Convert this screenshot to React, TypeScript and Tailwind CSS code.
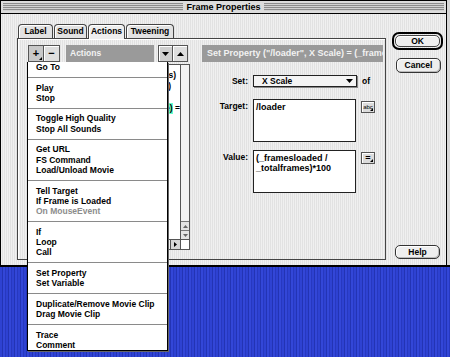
import React from 'react';

type MenuEntry = { label?: string; disabled?: boolean; sep?: boolean };

const menuEntries: MenuEntry[] = [
  { label: 'Go To' },
  { sep: true },
  { label: 'Play' },
  { label: 'Stop' },
  { sep: true },
  { label: 'Toggle High Quality' },
  { label: 'Stop All Sounds' },
  { sep: true },
  { label: 'Get URL' },
  { label: 'FS Command' },
  { label: 'Load/Unload Movie' },
  { sep: true },
  { label: 'Tell Target' },
  { label: 'If Frame is Loaded' },
  { label: 'On MouseEvent', disabled: true },
  { sep: true },
  { label: 'If' },
  { label: 'Loop' },
  { label: 'Call' },
  { sep: true },
  { label: 'Set Property' },
  { label: 'Set Variable' },
  { sep: true },
  { label: 'Duplicate/Remove Movie Clip' },
  { label: 'Drag Movie Clip' },
  { sep: true },
  { label: 'Trace' },
  { label: 'Comment' },
];

const tabs = [
  { name: 'Label', w: 'w-[35px]' },
  { name: 'Sound', w: 'w-[33px]' },
  { name: 'Actions', w: 'w-[37px]', active: true },
  { name: 'Tweening', w: 'w-[48px]' },
];

function TriDown() {
  return (
    <svg width="7" height="4" viewBox="0 0 7 4">
      <polygon points="0,0 7,0 3.5,4" fill="#000" />
    </svg>
  );
}

function TriUp() {
  return (
    <svg width="7" height="4" viewBox="0 0 7 4">
      <polygon points="0,4 7,4 3.5,0" fill="#000" />
    </svg>
  );
}

// little popup marker in the lower right corner of a button
function Corner() {
  return (
    <svg className="absolute right-[1px] bottom-[1px]" width="3" height="3" viewBox="0 0 3 3">
      <polygon points="3,0 3,3 0,3" fill="#000" />
    </svg>
  );
}

function TitleBar() {
  return (
    <div className="h-[13px] flex items-center px-[2px] border-b border-black bg-[#dcdcdc]">
      <div className="flex-1 h-[8px] bg-[image:repeating-linear-gradient(180deg,#8c8c8c_0px,#8c8c8c_1px,#d2d2d2_1px,#d2d2d2_2px)]" />
      <div className="px-[3px] text-[9px] leading-[12px] whitespace-nowrap">Frame Properties</div>
      <div className="flex-1 h-[8px] bg-[image:repeating-linear-gradient(180deg,#8c8c8c_0px,#8c8c8c_1px,#d2d2d2_1px,#d2d2d2_2px)]" />
    </div>
  );
}

function Tabs() {
  return (
    <div className="h-[14px] flex items-start gap-[1px] pl-[1px]">
      {tabs.map((t) =>
        t.active ? (
          <div
            key={t.name}
            className={`${t.w} relative z-10 h-[15px] rounded-t-[4px] border border-b-0 border-[#444] bg-[#eeeeee] shadow-[inset_1px_1px_0_#fff] text-center text-[8.5px] leading-[13px]`}
          >
            {t.name}
          </div>
        ) : (
          <div
            key={t.name}
            className={`${t.w} h-[14px] rounded-t-[4px] border border-b-0 border-[#444] bg-[#e2e2e2] shadow-[inset_1px_1px_0_#fff] text-center text-[8.5px] leading-[13px]`}
          >
            {t.name}
          </div>
        )
      )}
    </div>
  );
}

function ActionList() {
  return (
    <div className="w-[163px] flex flex-col">
      {/* toolbar */}
      <div className="h-[17px] flex">
        <div className="relative ml-[1px] w-[16px] border border-[#555] bg-[#c8c8c8] flex items-center justify-center text-[11px] leading-none">
          +
          <Corner />
        </div>
        <div className="w-[16px] border border-l-0 border-[#555] bg-[#dedede] shadow-[inset_1px_1px_0_#fff] flex items-center justify-center text-[11px] leading-none">
          −
        </div>
        <div className="ml-[6px] w-[88px] bg-[#9a9a9a] text-[#f2f2f2] text-[8.5px] leading-[17px] pl-[4px]">Actions</div>
        <div className="ml-[4px] w-[15px] border border-[#555] bg-[#cfcfcf] shadow-[inset_1px_1px_0_#fff] flex items-center justify-center">
          <TriDown />
        </div>
        <div className="w-[15px] border border-l-0 border-[#555] bg-[#dedede] shadow-[inset_1px_1px_0_#fff] flex items-center justify-center">
          <TriUp />
        </div>
      </div>

      {/* list box */}
      <div className="mt-[2px] h-[186px] border border-[#555] bg-white flex flex-col">
        <div className="flex-1 flex">
          <div className="flex-1 pt-[5px] overflow-hidden text-[8.5px]">
            <div className="h-[11px] leading-[11px] flex justify-end overflow-hidden whitespace-nowrap pr-[4px]">
              Load Movie ("loader.swf", 1, Vars=POST)s)
            </div>
            <div className="h-[11px] leading-[11px] flex justify-end overflow-hidden whitespace-nowrap pr-[9px]">
              Tell Target ("/loader")
            </div>
            <div className="h-[11px] leading-[11px] flex justify-end overflow-hidden whitespace-nowrap pr-[30px]">
              Go to and Play (2)
            </div>
            <div className="h-[11px] leading-[11px] flex justify-end overflow-hidden whitespace-nowrap">
              <span className="bg-[#66ffcc]">Set Property ("/loader", X Scale) = (_framesloade)</span>
              <span>&nbsp;=</span>
            </div>
          </div>
          <div className="w-[9px] border-l border-[#555] flex flex-col">
            <div className="flex-1 bg-[#f2f2f2]" />
            <div className="h-[9px] border-t border-[#777] bg-[#e4e4e4] flex items-center justify-center">
              <svg width="5" height="3" viewBox="0 0 5 3">
                <polygon points="0,3 5,3 2.5,0" fill="#666" />
              </svg>
            </div>
            <div className="h-[9px] border-t border-[#777] bg-[#e4e4e4] flex items-center justify-center">
              <svg width="5" height="3" viewBox="0 0 5 3">
                <polygon points="0,0 5,0 2.5,3" fill="#666" />
              </svg>
            </div>
          </div>
        </div>
        <div className="h-[10px] border-t border-[#555] flex">
          <div className="flex-1 bg-[#f2f2f2]" />
          <div className="w-[10px] border-l border-[#555] bg-[#d8d8d8] flex items-center justify-center">
            <svg width="3" height="5" viewBox="0 0 3 5">
              <polygon points="0,0 3,2.5 0,5" fill="#000" />
            </svg>
          </div>
          <div className="w-[9px] border-l border-[#555] bg-white" />
        </div>
      </div>
    </div>
  );
}

function PropertyForm() {
  return (
    <div className="ml-[12px] w-[181px] flex flex-col text-[8.5px]">
      <div className="h-[17px] bg-[#9a9a9a] text-[#f2f2f2] text-[9px] leading-[17px] pl-[5px] whitespace-nowrap overflow-hidden">
        Set Property ("/loader", X Scale) = (_framesloaded / _totalframes)*100
      </div>

      <div className="mt-[13px] h-[12px] flex items-center">
        <div className="w-[46px] text-right">Set:</div>
        <div className="ml-[5px] w-[104px] h-[12px] border border-[#222] bg-[#f4f4f4] shadow-[1px_1px_0_#888] flex items-center pl-[8px] pr-[3px]">
          <span className="flex-1 leading-[10px]">X Scale</span>
          <TriDown />
        </div>
        <div className="ml-[5px]">of</div>
      </div>

      <div className="mt-[12px] flex items-start">
        <div className="w-[46px] text-right pt-[2px] leading-[10px]">Target:</div>
        <div className="ml-[5px] w-[103px] h-[43px] border border-[#222] bg-white px-[2px] pt-[2px] text-[9px] leading-[10px]">/loader</div>
        <div className="relative ml-[5px] mt-[2px] w-[14px] h-[12px] border border-[#555] bg-[#dcdcdc] shadow-[inset_1px_1px_0_#fff] text-[6px] leading-[10px] text-center font-normal">
          abc
          <Corner />
        </div>
      </div>

      <div className="mt-[8px] flex items-start">
        <div className="w-[46px] text-right pt-[2px] leading-[10px]">Value:</div>
        <div className="ml-[5px] w-[103px] h-[43px] border border-[#222] bg-white px-[2px] pt-[2px] text-[9px] leading-[10px]">
          <div>(_framesloaded /</div>
          <div>_totalframes)*100</div>
        </div>
        <div className="relative ml-[5px] mt-[2px] w-[14px] h-[12px] border border-[#555] bg-[#dcdcdc] shadow-[inset_1px_1px_0_#fff] text-[9px] leading-[10px] text-center">
          =
          <Corner />
        </div>
      </div>
    </div>
  );
}

function PopupMenu() {
  return (
    <div className="absolute left-[27px] top-[62px] w-[141px] bg-white border border-t-0 border-black shadow-[1px_1px_0_#666] text-[8.5px]">
      {menuEntries.map((m, i) =>
        m.sep ? (
          <div key={i} className="h-[10.3px] flex items-center">
            <div className="h-px w-full bg-[#8a8a8a]" />
          </div>
        ) : (
          <div
            key={i}
            className={
              m.disabled
                ? 'h-[10.3px] leading-[10.3px] pl-[8px] whitespace-nowrap text-[#8c8c8c]'
                : 'h-[10.3px] leading-[10.3px] pl-[8px] whitespace-nowrap'
            }
          >
            {m.label}
          </div>
        )
      )}
    </div>
  );
}

export default function App() {
  return (
    <div className="relative w-[450px] h-[357px] overflow-hidden font-['Liberation_Sans',Arial,sans-serif] font-bold text-black select-none">
      <div className="flex h-[267px]">
        <div className="w-[447px] h-full flex flex-col border border-b-2 border-black bg-[image:repeating-linear-gradient(90deg,#f0f0f0_0px,#f0f0f0_1px,#e2e2e2_1px,#e2e2e2_2px)]">
          <TitleBar />
          <div className="flex-1 flex pl-[16px] pt-[10px]">
            {/* tabs + panel */}
            <div className="w-[369px] flex flex-col">
              <Tabs />
              <div className="h-[222px] border border-[#444] shadow-[inset_1px_1px_0_#fff] flex pt-[6px] pl-[9px]">
                <ActionList />
                <PropertyForm />
              </div>
            </div>

            {/* buttons */}
            <div className="ml-[6px] w-[53px] flex flex-col pt-[8px] pb-[6px] text-[8.5px]">
              <div className="w-[51px] h-[18px] rounded-[7px] border-2 border-black p-px">
                <div className="h-full rounded-[5px] border border-[#444] bg-[#eeeeee] shadow-[inset_1px_1px_0_#fff] flex items-center justify-center">
                  OK
                </div>
              </div>
              <div className="mt-[8px] ml-[4px] w-[45px] h-[15px] rounded-[5px] border border-[#333] bg-[#eeeeee] shadow-[inset_1px_1px_0_#fff,inset_-1px_-1px_0_#bbb] flex items-center justify-center">
                Cancel
              </div>
              <div className="mt-auto ml-[3px] w-[45px] h-[14px] rounded-[5px] border border-[#333] bg-[#eeeeee] shadow-[inset_1px_1px_0_#fff,inset_-1px_-1px_0_#bbb] flex items-center justify-center">
                Help
              </div>
            </div>
          </div>
        </div>
        <div className="w-[3px] h-full bg-[#d6d6d6] border-b-2 border-black" />
      </div>
      <div className="h-[90px] bg-[image:repeating-linear-gradient(90deg,#2e42d2_0px,#2e42d2_2px,#2334b4_2px,#2334b4_3px,#3347d8_3px,#3347d8_5px,#2738c0_5px,#2738c0_6px)]" />
      <PopupMenu />
    </div>
  );
}
